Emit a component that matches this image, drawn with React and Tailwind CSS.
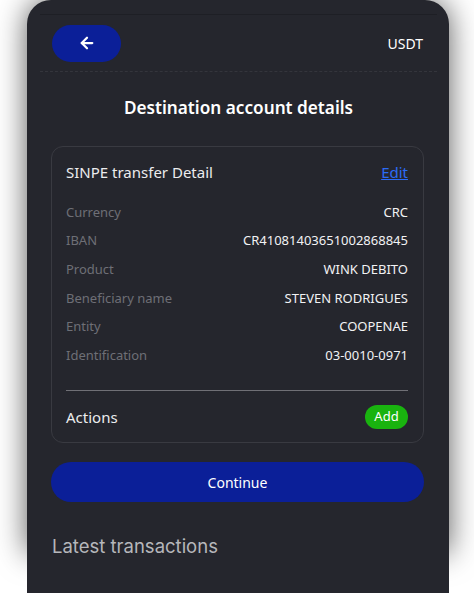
import React from "react";

const rows = [
  ["Currency", "CRC"],
  ["IBAN", "CR41081403651002868845"],
  ["Product", "WINK DEBITO"],
  ["Beneficiary name", "STEVEN RODRIGUES"],
  ["Entity", "COOPENAE"],
  ["Identification", "03-0010-0971"],
];

export default function App() {
  return (
    <div className="w-[474px] h-[596px] bg-white overflow-hidden" style={{ fontFamily: '"Noto Sans", "Open Sans", sans-serif' }}>
      <div className="ml-[27px] w-[422px] flex flex-col">
        <div className="h-[553px] bg-[#25262d] rounded-t-3xl shadow-[0_0_30px_rgba(0,0,0,0.65)] flex flex-col pl-[13px] pr-[12px] pt-[14px]">
          <div className="border-t border-[#1e1f25]" />
          <div className="flex items-center justify-between h-[57px] pl-[12px] pr-[14px] border-b border-dashed border-[#34353c]">
            <button className="w-[69px] h-[37px] rounded-full bg-[#0b1f98] flex items-center justify-center">
              <svg width="18" height="18" viewBox="0 0 24 24" fill="none" stroke="white" strokeWidth="3" strokeLinecap="round" strokeLinejoin="round">
                <path d="M19 12H5" />
                <path d="M12 19l-7-7 7-7" />
              </svg>
            </button>
            <span className="text-[14px] text-white">USDT</span>
          </div>
          <h1 className="text-center text-white text-[17.2px] font-semibold mt-[22px] leading-[28px]">Destination account details</h1>
          <div className="ml-[11px] mr-[13px] mt-[24px] rounded-xl border border-[#393a41] pl-[14px] pr-[15px] pt-[13px] pb-[13px]">
            <div className="flex items-center justify-between h-[24px]">
              <span className="text-[15px] text-[#ececee]">SINPE transfer Detail</span>
              <a className="text-[15px] text-[#2c6bf5] underline">Edit</a>
            </div>
            <div className="mt-[14px] flex flex-col">
              {rows.map(([k, v]) => (
                <div key={k} className="flex items-center justify-between h-[28.7px]">
                  <span className="text-[13px] text-[#6e6f76]">{k}</span>
                  <span className="text-[13px] text-[#f2f2f4]">{v}</span>
                </div>
              ))}
            </div>
            <div className="mt-[20px] border-t border-[#707076]" />
            <div className="flex items-center justify-between mt-[14px] h-[24px]">
              <span className="text-[15px] text-[#ececee]">Actions</span>
              <span className="w-[43px] h-[24px] rounded-full bg-[#19b30f] text-white text-[13px] flex items-center justify-center">Add</span>
            </div>
          </div>
          <button className="ml-[11px] mr-[13px] mt-[19px] h-[40px] rounded-full bg-[#0b1f98] text-white text-[14px]">Continue</button>
        </div>
        <div className="h-[40px] bg-[#25262d] relative">
          <span className="absolute left-[25px] -top-[20px] text-[18.5px] text-[#b6b7bb]" style={{ fontFamily: 'Inter, sans-serif' }}>Latest transactions</span>
        </div>
      </div>
    </div>
  );
}
